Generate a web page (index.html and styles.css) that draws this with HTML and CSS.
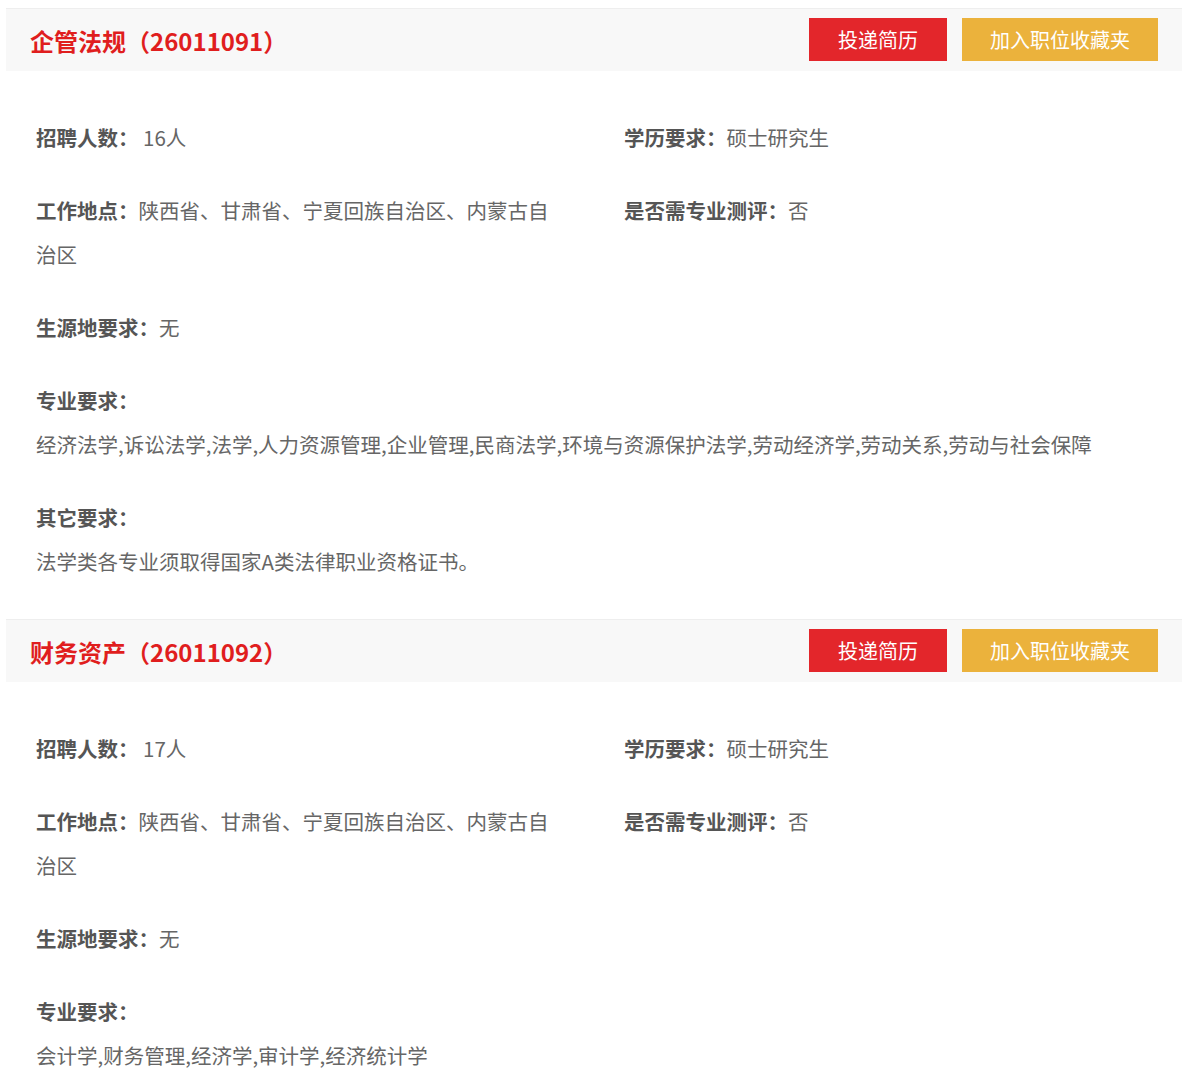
FILE: index.html
```html
<!DOCTYPE html>
<html lang="zh-CN">
<head>
    <meta charset="UTF-8">
    <meta name="viewport" content="width=device-width, initial-scale=1.0">
    <title>职位详情</title>
    <link rel="stylesheet" href="styles.css">
</head>
<body>
    <div class="job">
        <div class="job-head">
            <h2 class="job-title">企管法规（26011091）</h2>
            <div class="job-btns">
                <a class="btn btn-red" href="#">投递简历</a>
                <a class="btn btn-yellow" href="#">加入职位收藏夹</a>
            </div>
        </div>
        <div class="job-body">
            <div class="row">
                <div class="item item-left"><span class="label">招聘人数：</span> 16人</div>
                <div class="item"><span class="label">学历要求：</span>硕士研究生</div>
            </div>
            <div class="row">
                <div class="item item-left"><span class="label">工作地点：</span>陕西省、甘肃省、宁夏回族自治区、内蒙古自治区</div>
                <div class="item"><span class="label">是否需专业测评：</span>否</div>
            </div>
            <div class="row">
                <div class="item"><span class="label">生源地要求：</span>无</div>
            </div>
            <div class="row block">
                <div class="label">专业要求：</div>
                <div>经济法学,诉讼法学,法学,人力资源管理,企业管理,民商法学,环境与资源保护法学,劳动经济学,劳动关系,劳动与社会保障</div>
            </div>
            <div class="row block">
                <div class="label">其它要求：</div>
                <div>法学类各专业须取得国家A类法律职业资格证书。</div>
            </div>
        </div>
    </div>

    <div class="job">
        <div class="job-head">
            <h2 class="job-title">财务资产（26011092）</h2>
            <div class="job-btns">
                <a class="btn btn-red" href="#">投递简历</a>
                <a class="btn btn-yellow" href="#">加入职位收藏夹</a>
            </div>
        </div>
        <div class="job-body">
            <div class="row">
                <div class="item item-left"><span class="label">招聘人数：</span> 17人</div>
                <div class="item"><span class="label">学历要求：</span>硕士研究生</div>
            </div>
            <div class="row">
                <div class="item item-left"><span class="label">工作地点：</span>陕西省、甘肃省、宁夏回族自治区、内蒙古自治区</div>
                <div class="item"><span class="label">是否需专业测评：</span>否</div>
            </div>
            <div class="row">
                <div class="item"><span class="label">生源地要求：</span>无</div>
            </div>
            <div class="row block">
                <div class="label">专业要求：</div>
                <div>会计学,财务管理,经济学,审计学,经济统计学</div>
            </div>
        </div>
    </div>
</body>
</html>
```

FILE: styles.css
```css
body {
    margin: 0;
    padding: 8px 4px 0 6px;
    background: #fff;
    font-family: "Noto Sans CJK SC", "Noto Sans", sans-serif;
    color: #666;
}
.job-head {
    display: flex;
    justify-content: space-between;
    align-items: center;
    height: 62px;
    padding: 0 24px;
    background-color: #f8f8f8;
    border-top: 1px solid #eeeeee;
}
.job-title {
    margin: 0;
    font-size: 24px;
    font-weight: bold;
    color: #e01e1e;
}
.job-btns {
    display: flex;
    gap: 15px;
    margin-top: -2px;
}
.btn {
    display: block;
    height: 43px;
    line-height: 43px;
    padding: 0 29px;
    font-size: 20px;
    color: #fff;
    text-decoration: none;
}
.btn-red {
    background-color: #e3262b;
}
.btn-yellow {
    padding: 0 28px;
    background-color: #ebb23c;
}
.job-body {
    padding: 44px 30px 7px;
    font-size: 20.5px;
    line-height: 44px;
}
.row {
    display: flex;
    margin-bottom: 29px;
}
.row.block {
    display: block;
}
.item-left {
    width: 520px;
    margin-right: 68px;
}
.label {
    font-weight: bold;
    color: #555;
}
```
